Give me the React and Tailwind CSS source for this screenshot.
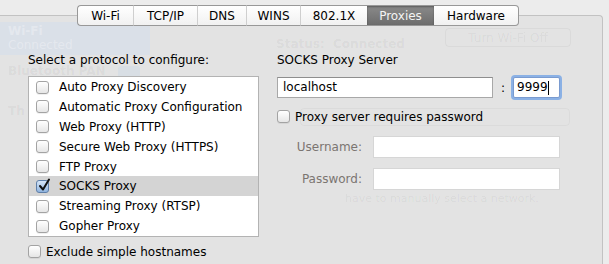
import React from 'react';

const tabs = [
  { label: 'Wi-Fi', w: 'w-[56px]' },
  { label: 'TCP/IP', w: 'w-[64px]' },
  { label: 'DNS', w: 'w-[49px]' },
  { label: 'WINS', w: 'w-[54px]' },
  { label: '802.1X', w: 'w-[67px]' },
  { label: 'Proxies', w: 'w-[67px]', active: true },
  { label: 'Hardware', w: 'w-[85px]' },
];

const protocols = [
  'Auto Proxy Discovery',
  'Automatic Proxy Configuration',
  'Web Proxy (HTTP)',
  'Secure Web Proxy (HTTPS)',
  'FTP Proxy',
  'SOCKS Proxy',
  'Streaming Proxy (RTSP)',
  'Gopher Proxy',
];

function Checkbox({ checked }) {
  if (checked) {
    return (
      <div className="relative w-[13px] h-[13px] rounded-[3px] border border-[#5f7fa8] bg-gradient-to-b from-[#d6e6f8] to-[#8fb3de] shrink-0">
        <svg className="absolute left-[1px] top-[-3px]" width="13" height="14" viewBox="0 0 13 14">
          <path d="M2 8 L5 11.5 L11 1.5" fill="none" stroke="#111" strokeWidth="2" strokeLinecap="round" strokeLinejoin="round" />
        </svg>
      </div>
    );
  }
  return (
    <div className="w-[13px] h-[13px] rounded-[3px] border border-[#a3a3a3] bg-gradient-to-b from-[#ffffff] to-[#e6e6e6] shadow-[0_1px_0_rgba(0,0,0,0.06)] shrink-0" />
  );
}

function Ghost() {
  // washed-out network pane showing through the sheet
  return (
    <div className="absolute inset-0 pointer-events-none text-[12px]">
      <div className="absolute left-0 top-[6px] w-[150px] h-[33px] bg-[#dae0e8] pl-[8px] pt-[2px] leading-[14px] text-white/30 font-bold">
        <div>Wi-Fi</div>
        <div className="font-normal">Connected</div>
      </div>
      <div className="absolute left-[8px] top-[46px] text-black/[0.05] font-bold">Bluetooth PAN</div>
      <div className="absolute left-[118px] top-[50px] w-[22px] h-[18px] rounded-[3px] bg-[#c9d6e6]/40" />
      <div className="absolute left-[8px] top-[86px] text-black/[0.05] font-bold">Th</div>
      <div className="absolute left-[276px] top-[19px] text-black/[0.05] font-bold">Status:&nbsp;&nbsp;Connected</div>
      <div className="absolute left-[445px] top-[12px] w-[126px] h-[19px] rounded-[4px] border border-black/[0.04] text-center leading-[18px] text-black/[0.05]">
        Turn Wi-Fi Off
      </div>
      <div className="absolute left-[300px] top-[92px] w-[270px] h-[18px] rounded-[4px] border border-black/[0.03]" />
      <div className="absolute left-[345px] top-[175px] text-[11px] text-black/[0.05]">have to manually select a network.</div>
    </div>
  );
}

export default function App() {
  return (
    <div
      className="w-[609px] h-[264px] bg-[#ececec] overflow-hidden flex flex-col text-[12px] text-black"
      style={{ fontFamily: '"Lucida Grande", "DejaVu Sans", sans-serif' }}
    >
      {/* tab strip */}
      <div className="relative z-20 mt-[5px] ml-[77px] flex h-[22px]">
        {tabs.map((t, i) => {
          const first = i === 0;
          const last = i === tabs.length - 1;
          return (
            <div
              key={t.label}
              className={[
                t.w,
                'h-full flex items-center justify-center border-y border-[#989898]',
                first ? 'border-l rounded-l-[4px]' : '',
                last ? 'border-r rounded-r-[4px]' : '',
                t.active
                  ? 'bg-gradient-to-b from-[#8a8a8a] to-[#6d6d6d] text-[#f4f4f4] shadow-[inset_0_1px_2px_rgba(0,0,0,0.35)]'
                  : 'bg-gradient-to-b from-[#ffffff] to-[#f1f1f1] text-black',
                !first && !t.active && !tabs[i - 1].active ? 'border-l border-l-[#cfcfcf]' : '',
              ].join(' ')}
            >
              {t.label}
            </div>
          );
        })}
      </div>

      {/* group box */}
      <div className="relative -mt-[11px] w-[603px] h-[260px] bg-[#e3e3e3] border-t border-r border-[#c2c2c2] rounded-tr-[4px]">
        <Ghost />
        <div className="relative flex pt-[36px]">
          {/* left column */}
          <div className="ml-[28px] w-[231px] flex flex-col">
            <div className="h-[16px] leading-[16px]">Select a protocol to configure:</div>
            <div className="mt-[8px] h-[161px] bg-white border border-[#b3b3b3] flex flex-col">
              {protocols.map((p) => {
                const sel = p === 'SOCKS Proxy';
                return (
                  <div
                    key={p}
                    className={`h-[20px] flex items-center pl-[7px] gap-[10px] ${sel ? 'bg-[#d4d4d4]' : ''}`}
                  >
                    <Checkbox checked={sel} />
                    <span>{p}</span>
                  </div>
                );
              })}
            </div>
            <div className="mt-[7px] flex items-center gap-[5px] h-[15px]">
              <Checkbox />
              <span>Exclude simple hostnames</span>
            </div>
          </div>

          {/* right column */}
          <div className="ml-[18px] w-[284px] flex flex-col">
            <div className="h-[16px] leading-[16px]">SOCKS Proxy Server</div>
            <div className="mt-[9px] flex items-center">
              <div className="w-[216px] h-[21px] bg-white border border-[#a8a8a8] border-t-[#8e8e8e] pl-[5px] leading-[19px]">
                localhost
              </div>
              <span className="w-[20px] text-center">:</span>
              <div className="w-[47px] h-[21px] bg-white border border-[#7a9bd0] rounded-[2px] shadow-[0_0_0_2px_rgba(110,160,230,0.75)] pl-[3px] leading-[19px] flex items-center">
                <span>9999</span>
                <span className="w-[1px] h-[14px] bg-black" />
              </div>
            </div>
            <div className="mt-[11px] flex items-center gap-[5px] h-[15px]">
              <Checkbox />
              <span>Proxy server requires password</span>
            </div>
            <div className="mt-[12px] flex items-center">
              <span className="w-[85px] text-right text-[#7b7571]">Username:</span>
              <div className="ml-[11px] w-[187px] h-[22px] bg-white border border-[#d6d6d6]" />
            </div>
            <div className="mt-[10px] flex items-center">
              <span className="w-[85px] text-right text-[#7b7571]">Password:</span>
              <div className="ml-[11px] w-[187px] h-[22px] bg-white border border-[#d6d6d6]" />
            </div>
          </div>
        </div>
      </div>
    </div>
  );
}
